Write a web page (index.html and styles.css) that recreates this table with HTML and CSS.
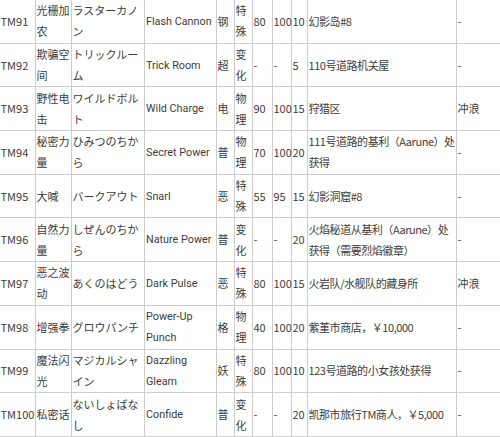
FILE: index.html
```html
<!DOCTYPE html>
<html lang="zh">
<head>
<meta charset="utf-8">
<title>TM</title>
<link rel="stylesheet" href="styles.css">
</head>
<body>
<table class="tm-table">
  <colgroup>
    <col class="c-no"><col class="c-zh"><col class="c-ja"><col class="c-en"><col class="c-type"><col class="c-cat"><col class="c-pow"><col class="c-acc"><col class="c-pp"><col class="c-loc"><col class="c-extra">
  </colgroup>
  <tbody>
    <tr><td>TM91</td><td>光栅加农</td><td>ラスターカノン</td><td class="en">Flash Cannon</td><td>钢</td><td>特殊</td><td>80</td><td>100</td><td>10</td><td class="loc">幻影岛#8</td><td>-</td></tr>
    <tr><td>TM92</td><td>欺骗空间</td><td>トリックルーム</td><td class="en">Trick Room</td><td>超</td><td>变化</td><td>-</td><td>-</td><td>5</td><td class="loc">110号道路机关屋</td><td>-</td></tr>
    <tr><td>TM93</td><td>野性电击</td><td>ワイルドボルト</td><td class="en">Wild Charge</td><td>电</td><td>物理</td><td>90</td><td>100</td><td>15</td><td class="loc">狩猎区</td><td>冲浪</td></tr>
    <tr><td>TM94</td><td>秘密力量</td><td>ひみつのちから</td><td class="en">Secret Power</td><td>普</td><td>物理</td><td>70</td><td>100</td><td>20</td><td class="loc">111号道路的基利（Aarune）处获得</td><td>-</td></tr>
    <tr><td>TM95</td><td>大喊</td><td>バークアウト</td><td class="en">Snarl</td><td>恶</td><td>特殊</td><td>55</td><td>95</td><td>15</td><td class="loc">幻影洞窟#8</td><td>-</td></tr>
    <tr><td>TM96</td><td>自然力量</td><td>しぜんのちから</td><td class="en">Nature Power</td><td>普</td><td>变化</td><td>-</td><td>-</td><td>20</td><td class="loc">火焰秘道从基利（Aarune）处获得（需要烈焰徽章）</td><td>-</td></tr>
    <tr><td>TM97</td><td>恶之波动</td><td>あくのはどう</td><td class="en">Dark Pulse</td><td>恶</td><td>特殊</td><td>80</td><td>100</td><td>15</td><td class="loc">火岩队/水舰队的藏身所</td><td>冲浪</td></tr>
    <tr><td>TM98</td><td>增强拳</td><td>グロウパンチ</td><td class="en">Power-Up Punch</td><td>格</td><td>物理</td><td>40</td><td>100</td><td>20</td><td class="loc">紫堇市商店，￥10,000</td><td>-</td></tr>
    <tr><td>TM99</td><td>魔法闪光</td><td>マジカルシャイン</td><td class="en">Dazzling Gleam</td><td>妖</td><td>特殊</td><td>80</td><td>100</td><td>10</td><td class="loc">123号道路的小女孩处获得</td><td>-</td></tr>
    <tr><td>TM100</td><td>私密话</td><td>ないしょばなし</td><td class="en">Confide</td><td>普</td><td>变化</td><td>-</td><td>-</td><td>20</td><td class="loc">凯那市旅行TM商人，￥5,000</td><td>-</td></tr>
  </tbody>
</table>
</body>
</html>
```
FILE: styles.css
```css
html, body {
  margin: 0;
  padding: 0;
  background: #ffffff;
  overflow: hidden;
}

.tm-table {
  margin: -1px 0 0 -1px;
  border-collapse: collapse;
  table-layout: fixed;
  width: 561px;
  font-family: "Noto Sans CJK SC", "Noto Sans", sans-serif;
  font-size: 11px;
  line-height: 21px;
  color: #3c3c3c;
}

.tm-table tr {
  height: 43.7px;
}

.tm-table td {
  border: 1px solid #cdcdcd;
  padding: 0 0 0 0.5px;
  vertical-align: middle;
  text-align: left;
  white-space: normal;
}

.tm-table td.en {
  font-family: Roboto, "Noto Sans", sans-serif;
  font-size: 10.8px;
  padding-left: 1px;
}

.tm-table td.loc {
  letter-spacing: -0.45px;
}

.c-no { width: 36px; }
.c-zh { width: 36px; }
.c-ja { width: 73px; }
.c-en { width: 72px; }
.c-type { width: 18px; }
.c-cat { width: 18px; }
.c-pow { width: 20px; }
.c-acc { width: 19px; }
.c-pp { width: 16px; }
.c-loc { width: 149px; }
.c-extra { width: 104px; }
```
